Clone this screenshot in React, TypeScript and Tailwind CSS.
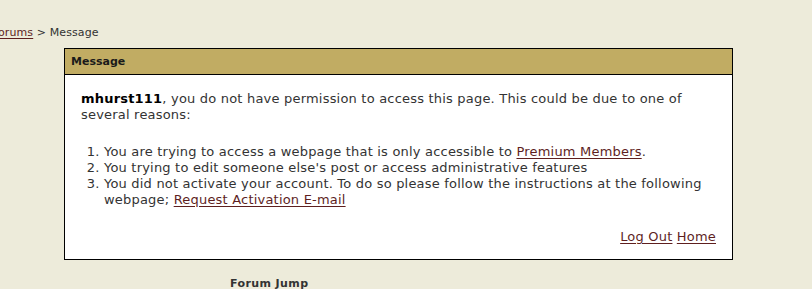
import React from 'react';

const font = { fontFamily: '"DejaVu Sans", Verdana, sans-serif' };

const Link: React.FC<{ children: React.ReactNode }> = ({ children }) => (
  <a href="#" className="text-[#5e1f1f] underline underline-offset-2">
    {children}
  </a>
);

export default function App() {
  return (
    <div className="min-h-[289px] w-full bg-[#edebda] text-[#333333] overflow-hidden" style={font}>
      {/* Breadcrumb */}
      <div className="pt-[26px] ml-[-8px] text-[11px] leading-[14px] tracking-[0.1px]">
        <Link>Forums</Link> &gt; Message
      </div>

      {/* Message box */}
      <div className="mt-[8px] ml-[64px] w-[669px] border border-black bg-white">
        <div className="h-[26px] bg-[#c1ac63] border-b border-black px-[6px] pt-[2px] flex items-center text-[11px] font-bold text-[#1a1a1a]">
          Message
        </div>
        <div className="px-[16px] pt-[16px] pb-[14px] text-[13px] leading-[16px] tracking-[0.2px]">
          <p>
            <b className="text-black">mhurst111</b>, you do not have permission to access this page. This could be due to one of several reasons:
          </p>
          <ol className="list-decimal pl-[23px] mt-[21px]">
            <li>
              You are trying to access a webpage that is only accessible to <Link>Premium Members</Link>.
            </li>
            <li>You trying to edit someone else's post or access administrative features</li>
            <li>
              You did not activate your account. To do so please follow the instructions at the following webpage; <Link>Request Activation E-mail</Link>
            </li>
          </ol>
          <div className="mt-[21px] text-right">
            <Link>Log Out</Link> <Link>Home</Link>
          </div>
        </div>
      </div>

      {/* Forum jump */}
      <div className="mt-[17px] ml-[230px] text-[11px] font-bold leading-[14px] tracking-[0.4px]">Forum Jump</div>
    </div>
  );
}
